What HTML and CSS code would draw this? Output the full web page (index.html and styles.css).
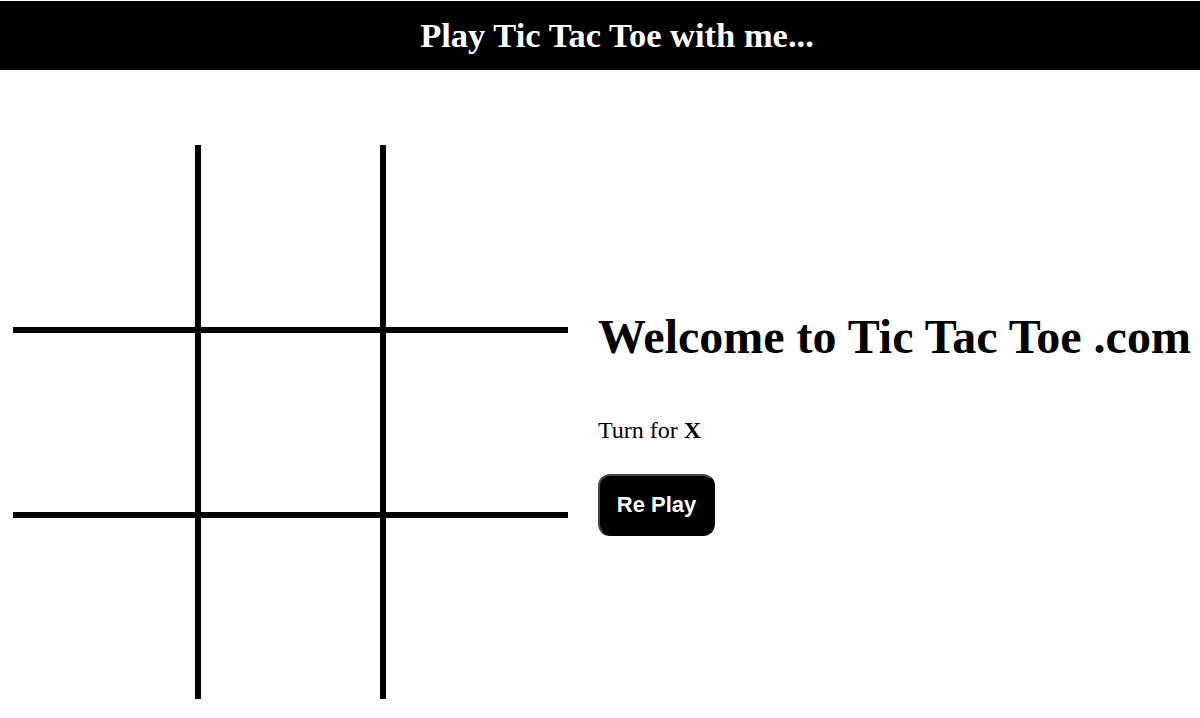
FILE: index.html
```html
<!DOCTYPE html>
<html>
<head>
<meta charset="utf-8">
<title>Tic Tac Toe</title>
<link rel="stylesheet" href="styles.css">
</head>
<body>
<header class="topbar">
  <h2 class="topbar-title">Play Tic Tac Toe with me...</h2>
</header>
<main class="game">
  <div class="board">
    <div class="cell c1 r1"></div>
    <div class="cell c2 r1"></div>
    <div class="cell c3 r1"></div>
    <div class="cell c1 r2"></div>
    <div class="cell c2 r2"></div>
    <div class="cell c3 r2"></div>
    <div class="cell c1 r3"></div>
    <div class="cell c2 r3"></div>
    <div class="cell c3 r3"></div>
  </div>
  <section class="info">
    <h1 class="welcome">Welcome to Tic Tac Toe .com</h1>
    <p class="turn">Turn for <b>X</b></p>
    <button class="replay">Re Play</button>
  </section>
</main>
</body>
</html>
```

FILE: styles.css
```css
html, body {
  margin: 0;
  padding: 0;
  background: #fff;
  font-family: "Liberation Serif", "Times New Roman", serif;
  color: #000;
}

body {
  padding-top: 1px;
  overflow: hidden;
}

.topbar {
  background: #000;
  height: 69px;
  display: flex;
  align-items: center;
  justify-content: center;
  padding-left: 34px;
}

.topbar-title {
  margin: 0;
  color: #fff;
  font-size: 34.5px;
  font-weight: bold;
  line-height: normal;
}

.game {
  display: flex;
  align-items: center;
  padding: 75px 0 0 13px;
  gap: 30px;
}

.board {
  display: grid;
  grid-template-columns: 185px 185px 185px;
  grid-template-rows: 185px 185px 184px;
  flex: 0 0 auto;
}

.cell {
  box-sizing: border-box;
  border: 0 solid #000;
}

.c1 { border-right-width: 3px; }
.c2 { border-left-width: 3px; border-right-width: 3px; }
.c3 { border-left-width: 3px; }
.r1 { border-bottom-width: 3px; }
.r2 { border-top-width: 3px; border-bottom-width: 3px; }
.r3 { border-top-width: 3px; }

.info {
  flex: 0 0 auto;
  white-space: nowrap;
}

.welcome {
  margin: 0 0 53px;
  font-size: 48px;
  font-weight: bold;
  line-height: normal;
}

.turn {
  margin: 0 0 30px;
  font-size: 24px;
  line-height: normal;
}

.replay {
  display: block;
  box-sizing: border-box;
  width: 117px;
  height: 62px;
  padding: 0;
  background: #000;
  color: #fff;
  border: 2px solid;
  border-color: #474747 #000 #000 #474747;
  border-radius: 12px;
  font-family: "Liberation Sans", Arial, sans-serif;
  font-size: 22px;
  font-weight: bold;
}
```
